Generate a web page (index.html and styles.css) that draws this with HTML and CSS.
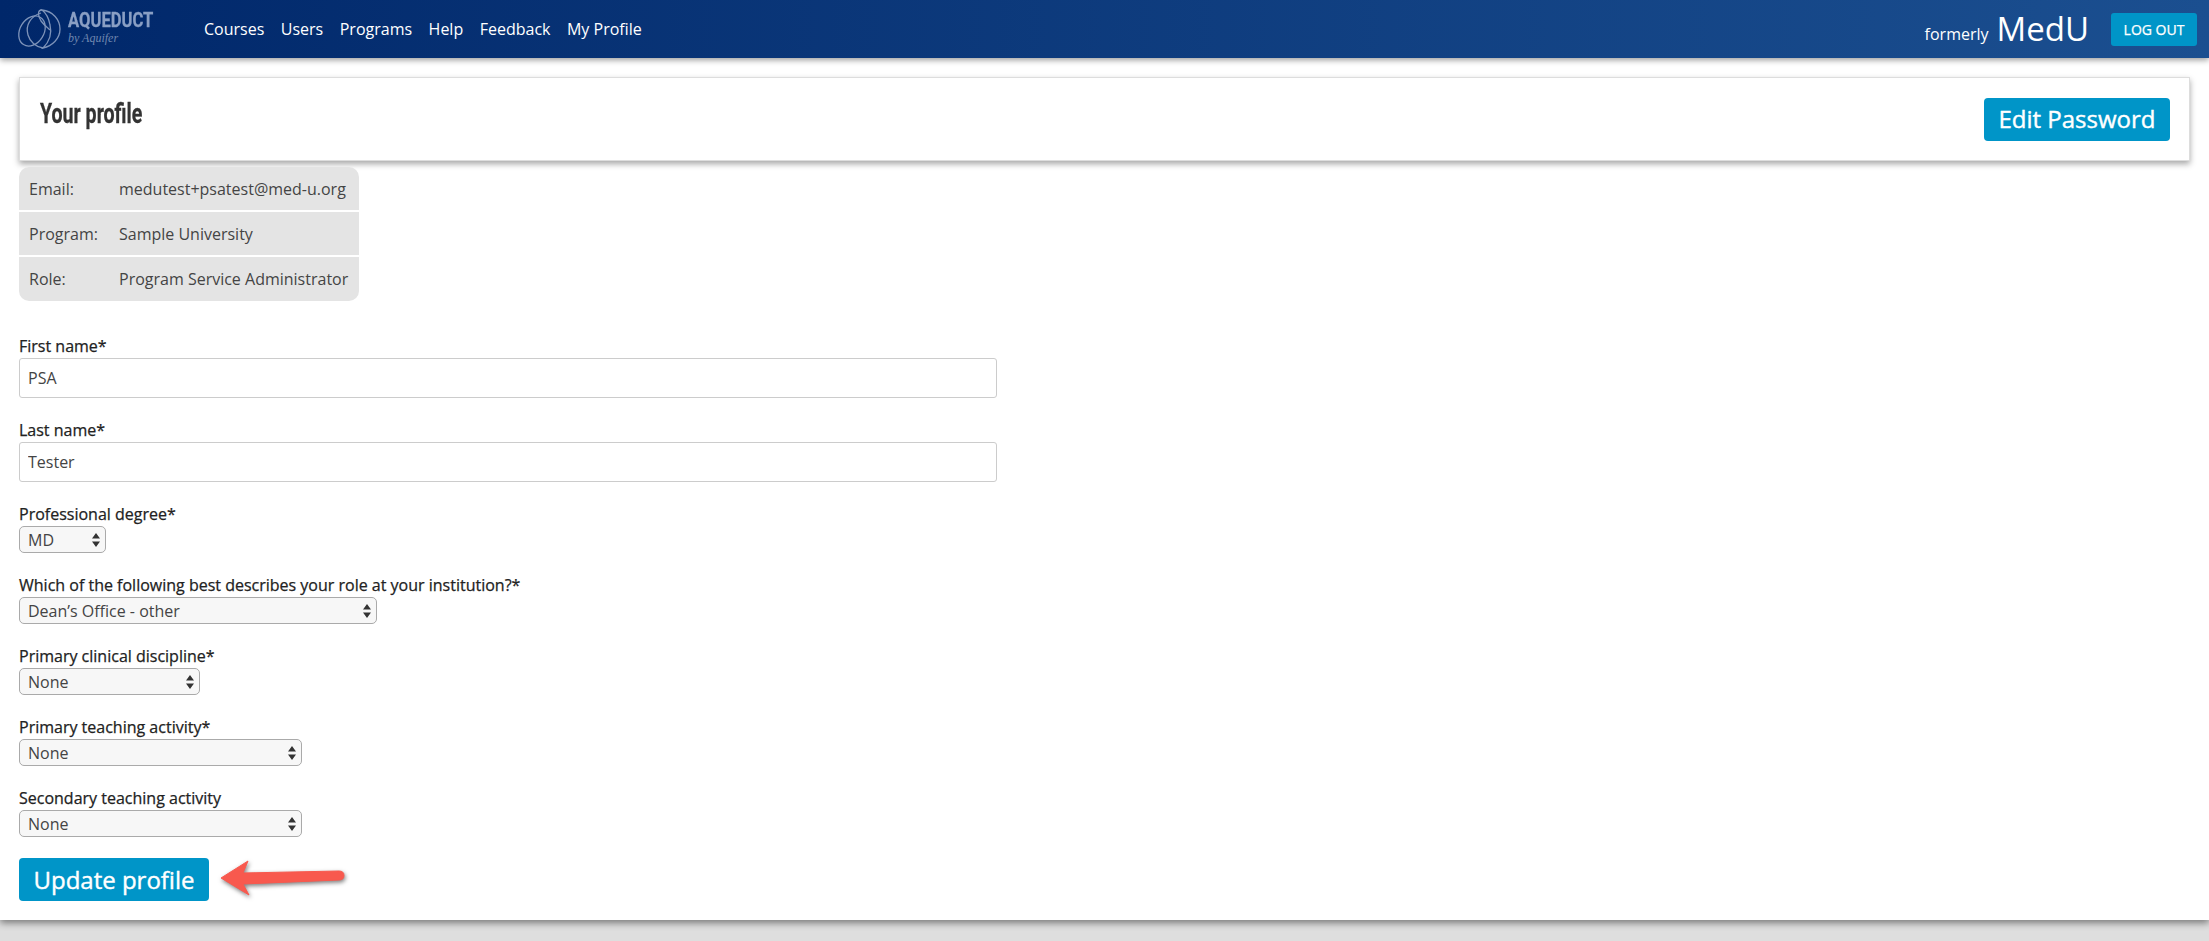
FILE: index.html
```html
<!DOCTYPE html>
<html>
    <head>
        <title>Your profile</title>
        <meta charset="UTF-8">
        <link rel="stylesheet" href="styles.css">
    </head>
    <body>
        <header class="topo">
            <div class="logo">
                <svg class="logo-marca" width="46" height="42" viewBox="0 0 46 42" fill="none" stroke="#7d93b9" stroke-width="1.3">
                    <path d="M25 2 C36 3 43 12 43 21 C43 31 35 38 26 40 C33 33 35 25 33 17 C32 11 29 5 25 2 Z"/>
                    <path d="M25 2 C20 2 21 8 24 13 C27 17 31 20 33 22"/>
                    <ellipse cx="15" cy="23" rx="12" ry="16" transform="rotate(32 15 23)"/>
                    <path d="M24 5 C14 8 8 17 11 27 C13 34 19 39 26 40"/>
                </svg>
                <div class="logo-texto">
                    <span class="logo-nome">AQUEDUCT</span>
                    <span class="logo-sub">by Aquifer</span>
                </div>
            </div>
            <nav class="menu">
                <a href="#">Courses</a>
                <a href="#">Users</a>
                <a href="#">Programs</a>
                <a href="#">Help</a>
                <a href="#">Feedback</a>
                <a href="#">My Profile</a>
            </nav>
            <div class="topo-direita">
                <span class="formerly">formerly</span>
                <span class="medu">MedU</span>
                <a class="logout" href="#">LOG OUT</a>
            </div>
        </header>

        <main class="conteudo">
            <div class="cartao">
                <h1>Your profile</h1>
                <a class="botao" href="#">Edit Password</a>
            </div>

            <div class="info">
                <div class="info-linha"><span class="info-nome">Email:</span><span>medutest+psatest@med-u.org</span></div>
                <div class="info-linha"><span class="info-nome">Program:</span><span>Sample University</span></div>
                <div class="info-linha"><span class="info-nome">Role:</span><span>Program Service Administrator</span></div>
            </div>

            <form class="perfil">
                <div class="campo">
                    <label>First name*</label>
                    <input type="text" value="PSA">
                </div>
                <div class="campo">
                    <label>Last name*</label>
                    <input type="text" value="Tester">
                </div>
                <div class="campo">
                    <label>Professional degree*</label>
                    <select class="sel-grau"><option>MD</option></select>
                </div>
                <div class="campo">
                    <label>Which of the following best describes your role at your institution?*</label>
                    <select class="sel-funcao"><option>Dean’s Office - other</option></select>
                </div>
                <div class="campo">
                    <label>Primary clinical discipline*</label>
                    <select class="sel-disciplina"><option>None</option></select>
                </div>
                <div class="campo">
                    <label>Primary teaching activity*</label>
                    <select class="sel-ensino"><option>None</option></select>
                </div>
                <div class="campo">
                    <label>Secondary teaching activity</label>
                    <select class="sel-ensino"><option>None</option></select>
                </div>
                <div class="acoes">
                    <button class="botao" type="button">Update profile</button>
                    <svg class="seta" width="128" height="42" viewBox="0 0 128 42">
                        <path d="M1 19 L28 2 L23 14 L119 12 Q124 12 124 16.5 Q124 21 119 21 L23 25 L29 36 Z" fill="#f8594e" stroke="#f8594e" stroke-width="1" stroke-linejoin="round"/>
                    </svg>
                </div>
            </form>
        </main>
    </body>
</html>
```

FILE: styles.css
```css
* {
    margin: 0;
    padding: 0;
    box-sizing: border-box;
    font-family: "Open Sans", sans-serif;
}
body {
    background-color: #dedede;
    height: 941px;
    overflow: hidden;
}
.topo {
    display: flex;
    align-items: center;
    height: 58px;
    padding: 0 12px 0 17px;
    background: linear-gradient(90deg, #00276a 0%, #1b4f90 100%);
    box-shadow: 0 2px 6px rgba(0, 0, 0, 0.4);
    position: relative;
}
.logo {
    display: flex;
    align-items: flex-start;
    gap: 5px;
    width: 187px;
}
.logo-texto {
    display: flex;
    flex-direction: column;
    padding-top: 2px;
}
.logo-nome {
    font-family: Roboto, sans-serif;
    font-weight: bold;
    font-size: 20px;
    line-height: 21px;
    color: #8a9fc4;
    transform: scaleX(0.83);
    transform-origin: left;
    white-space: nowrap;
    -webkit-text-stroke: 0.3px #8a9fc4;
}
.logo-sub {
    font-family: "Liberation Serif", serif;
    font-style: italic;
    font-size: 12px;
    line-height: 15px;
    color: #6f87af;
}
.menu {
    display: flex;
    gap: 16.5px;
}
.menu a {
    color: #ffffff;
    font-size: 16px;
    text-decoration: none;
}
.topo-direita {
    display: flex;
    align-items: center;
    margin-left: auto;
}
.formerly {
    color: #ffffff;
    font-size: 16px;
    margin-top: 10px;
    margin-right: 8px;
}
.medu {
    color: #ffffff;
    font-size: 33px;
    line-height: 40px;
    margin-right: 22px;
}
.logout {
    display: block;
    width: 86px;
    height: 33px;
    line-height: 33px;
    text-align: center;
    background-color: #0095c8;
    border-radius: 3px;
    color: #ffffff;
    font-size: 14px;
    text-decoration: none;
    -webkit-text-stroke: 0.25px #ffffff;
}
.conteudo {
    height: 862px;
    padding: 19px 19px 0;
    background-color: #ffffff;
    box-shadow: 0 3px 7px rgba(0, 0, 0, 0.45);
}
.cartao {
    display: flex;
    align-items: flex-start;
    justify-content: space-between;
    height: 84px;
    padding: 20px 19px 0 20px;
    border: 1px solid #dddddd;
    box-shadow: 0 3px 6px rgba(0, 0, 0, 0.35);
}
.cartao h1 {
    font-family: Roboto, sans-serif;
    font-size: 28px;
    line-height: 32px;
    color: #333333;
    transform: scaleX(0.7);
    transform-origin: left;
    white-space: nowrap;
    -webkit-text-stroke: 0.3px #333333;
}
.botao {
    display: block;
    width: 186px;
    height: 43px;
    padding: 0;
    line-height: 42px;
    text-align: center;
    background-color: #0095c8;
    border: none;
    border-radius: 4px;
    color: #ffffff;
    font-size: 24px;
    text-decoration: none;
    -webkit-text-stroke: 0.4px #ffffff;
}
.info {
    width: 340px;
    margin-top: 6px;
    background-color: #e4e4e4;
    border-radius: 10px;
    color: #444444;
    font-size: 16px;
}
.info-linha {
    display: flex;
    align-items: center;
    height: 45px;
    padding-left: 10px;
    border-bottom: 2px solid #ffffff;
}
.info-linha:last-child {
    height: 44px;
    border-bottom: none;
}
.info-nome {
    width: 90px;
}
.perfil {
    margin-top: 33px;
}
.campo {
    margin-bottom: 20px;
}
.campo label {
    display: block;
    height: 24px;
    line-height: 24px;
    color: #222222;
    font-size: 16px;
    -webkit-text-stroke: 0.25px #222222;
}
.campo input {
    display: block;
    width: 978px;
    height: 40px;
    padding: 0 8px;
    border: 1px solid #cccccc;
    border-radius: 3px;
    color: #444444;
    font-size: 16px;
}
.campo select {
    display: block;
    height: 27px;
    padding: 0 8px;
    appearance: none;
    background: #f7f7f7 url("data:image/svg+xml,%3Csvg xmlns='http://www.w3.org/2000/svg' width='8' height='14'%3E%3Cpath d='M4 0 L8 5.5 H0 Z M4 14 L8 8.5 H0 Z' fill='%23333'/%3E%3C/svg%3E") no-repeat right 5px center;
    border: 1px solid #aaaaaa;
    border-radius: 5px;
    color: #444444;
    font-size: 16px;
}
.sel-grau {
    width: 87px;
}
.sel-funcao {
    width: 358px;
}
.sel-disciplina {
    width: 181px;
}
.sel-ensino {
    width: 283px;
}
.acoes {
    display: flex;
    align-items: center;
    gap: 11px;
    margin-top: 21px;
}
.acoes .botao {
    width: 190px;
}
.seta {
    filter: drop-shadow(1px 2px 2px rgba(0, 0, 0, 0.5));
}
```
